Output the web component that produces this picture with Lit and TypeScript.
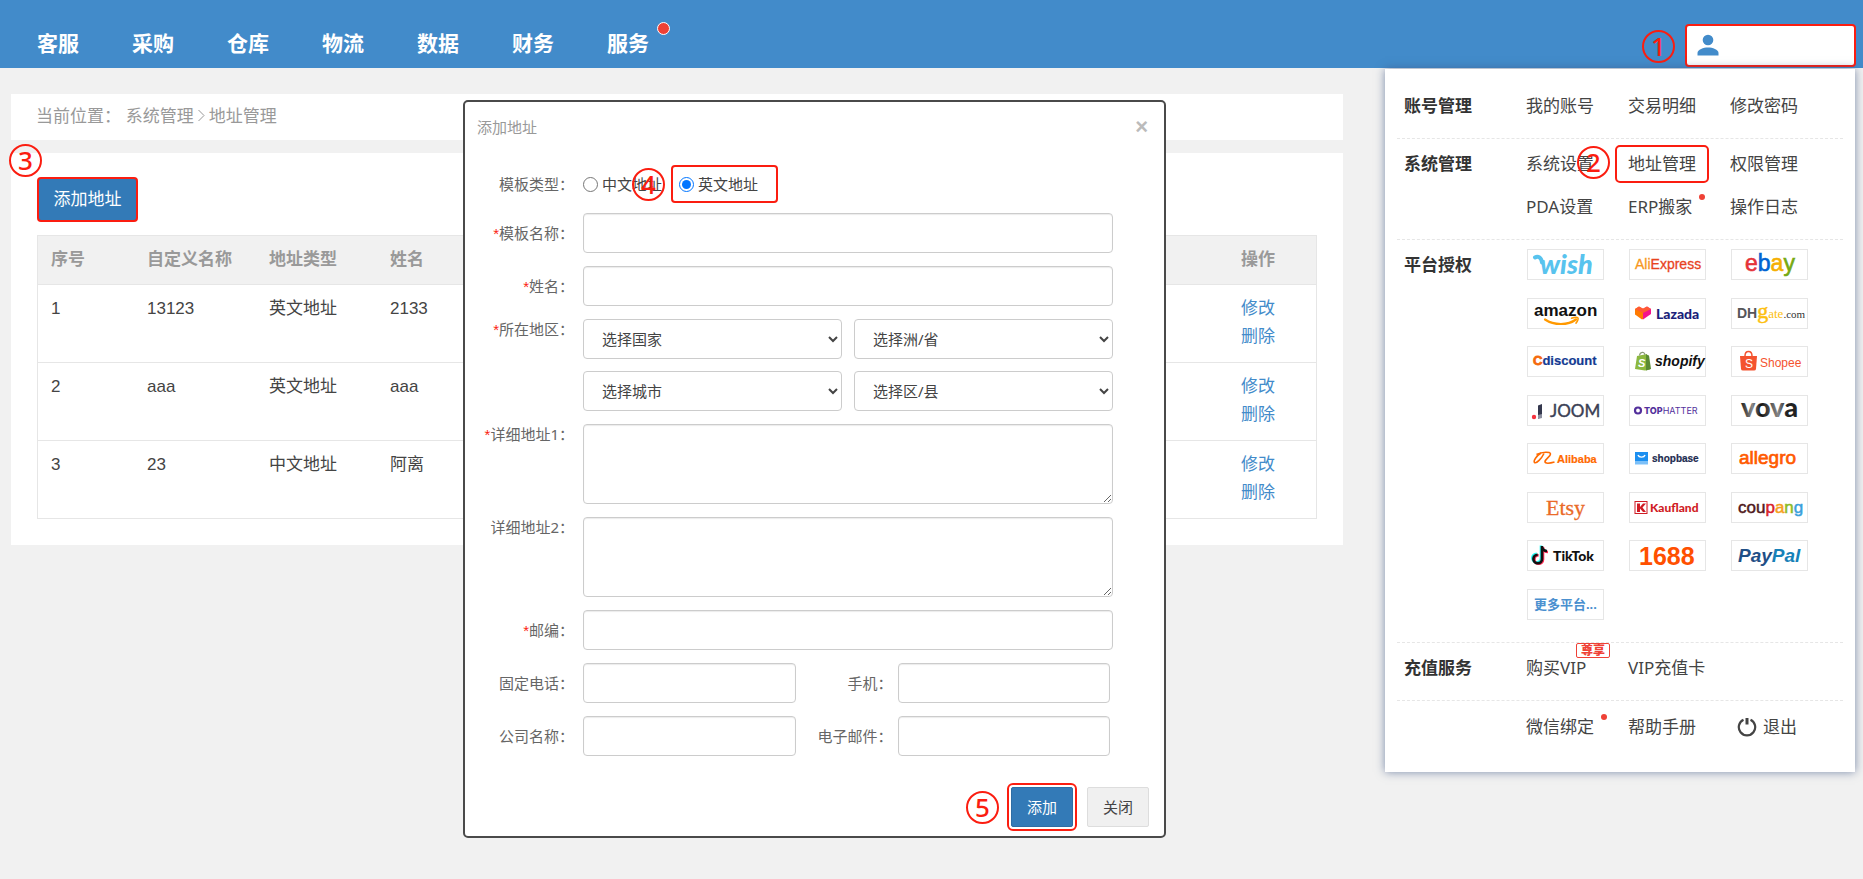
import { LitElement, html, svg, css, nothing } from "lit";
import { customElement, property } from "lit/decorators.js";

type Logo = { name: string; art: unknown };

const sans = "'Liberation Sans', sans-serif";
const serif = "'Liberation Serif', serif";
const lato = "Lato, sans-serif";
const inter = "Inter, sans-serif";

const LOGOS: Logo[] = [
  {
    name: "Wish",
    art: svg`<path d="M8 8.500c3-2 6.500 0 7 5" fill="none" stroke="#58c3ee" stroke-width="4" stroke-linecap="round"/>
      <text x="13" y="25" font-family=${lato} font-weight="900" font-style="italic" font-size="27" fill="#58c3ee">wish</text>`,
  },
  {
    name: "AliExpress",
    art: svg`<text x="6" y="20" font-family=${sans} font-size="14" fill="#f7971d" stroke="#f7971d" stroke-width=".3">Ali<tspan fill="#e8431f" stroke="#e8431f">Express</tspan></text>`,
  },
  {
    name: "eBay",
    art: svg`<text x="14" y="22" font-family=${sans} font-size="23" stroke-width=".6"><tspan fill="#e53238" stroke="#e53238">e</tspan><tspan fill="#0064d2" stroke="#0064d2">b</tspan><tspan fill="#f5af02" stroke="#f5af02">a</tspan><tspan fill="#76a912" stroke="#76a912">y</tspan></text>`,
  },
  {
    name: "Amazon",
    art: svg`<text x="7" y="18" font-family=${sans} font-weight="700" font-size="17" fill="#111">amazon</text>
      <path d="M18 21.500c9 6 23 6 31 0" fill="none" stroke="#f90" stroke-width="2.200" stroke-linecap="round"/>
      <path d="M44.500 20.300c3-1.200 6-1 6.500-.400s-.400 3.600-2 5.200" fill="none" stroke="#f90" stroke-width="1.500" stroke-linecap="round"/>`,
  },
  {
    name: "Lazada",
    art: svg`<path d="M6 11l4-2.500 4 2.500v10l-1 .500-7-5z" fill="#ff7a00"/><path d="M22 11l-4-2.500-4 2.500v10.500l8-5.500z" fill="#f4148c"/><path d="M6 11l8 4 8-4-4-2.500-4 2-4-2z" fill="#ff5a35"/>
      <text x="27" y="21" font-family=${lato} font-weight="900" font-size="14" fill="#1b1f7b">Lazada</text>`,
  },
  {
    name: "DHgate.com",
    art: svg`<text x="6" y="20" font-family=${sans} font-weight="700" font-size="14" fill="#565659">DH<tspan font-family=${serif} font-weight="400" font-size="22" fill="#fdc010" stroke="#fdc010" stroke-width=".5">g</tspan><tspan font-family=${serif} font-weight="400" font-size="13" fill="#fdc010">ate</tspan><tspan font-family=${serif} font-weight="400" font-size="11" fill="#333">.com</tspan></text>`,
  },
  {
    name: "Cdiscount",
    art: svg`<text x="6" y="19" font-family=${sans} font-weight="700" font-size="13" fill="#133a92" stroke="#133a92" stroke-width=".2"><tspan fill="#f56a0c" stroke="#f56a0c" stroke-width=".8">C</tspan>discount</text>`,
  },
  {
    name: "Shopify",
    art: svg`<path d="M8 10l10-2 3 15.500-5 1-10-1.500z" fill="#8cb83f"/><path d="M17 8.500l3 1 2 13.500-5 1.500z" fill="#5a8a33"/><path d="M10.500 9.500c.5-3.500 5-4.500 5.500-.5" fill="none" stroke="#8a9a78" stroke-width="1.200"/>
      <text x="9" y="21" font-family=${sans} font-weight="700" font-style="italic" font-size="11" fill="#fff">S</text>
      <text x="26" y="20" font-family=${sans} font-weight="700" font-style="italic" font-size="14" fill="#111">shopify</text>`,
  },
  {
    name: "Shopee",
    art: svg`<path d="M9 10h17l-1 13q-.200 1.500-2 1.500h-11q-1.800 0-2-1.500z" fill="#f4532f"/><path d="M14 10c0-6 7-6 7 0" fill="none" stroke="#f4532f" stroke-width="1.500"/>
      <text x="14" y="22" font-family=${sans} font-size="12" fill="#fff">S</text>
      <text x="29" y="21" font-family=${sans} font-size="12" fill="#f4532f">Shopee</text>`,
  },
  {
    name: "JOOM",
    art: svg`<circle cx="7" cy="22" r="2.200" fill="#f5333f"/><path d="M11 10.500l4-1.500v12.500l-4 2.500z" fill="#34384e"/><path d="M11 20l4-1v4l-4 1z" fill="#8d90a0"/>
      <text x="23" y="22" font-family=${lato} font-size="17" fill="#3b3f55" stroke="#3b3f55" stroke-width=".4">JOOM</text>`,
  },
  {
    name: "Tophatter",
    art: svg`<circle cx="9" cy="15.500" r="3" fill="none" stroke="#53309c" stroke-width="2.200"/>
      <text x="15" y="19" font-family=${inter} font-size="9" fill="#53309c"><tspan font-weight="800">TOP</tspan>HATTER</text>`,
  },
  {
    name: "VOVA",
    art: svg`<defs><linearGradient id="vv" x1="0" y1="0" x2="1" y2="0"><stop offset="0" stop-color="#222"/><stop offset=".2" stop-color="#888"/><stop offset=".35" stop-color="#111"/><stop offset=".65" stop-color="#888"/><stop offset=".8" stop-color="#222"/></linearGradient></defs>
      <text x="10" y="22" font-family=${lato} font-weight="900" font-size="27" fill="url(#vv)">vova</text>`,
  },
  {
    name: "Alibaba",
    art: svg`<path d="M14 10c-4 2.500-8 7.500-6.500 9.500 2 1.500 7-4 9.500-9" fill="none" stroke="#ff6a00" stroke-width="1.600"/>
      <path d="M9.500 11.500c6-3 14-3 14-.5s-5 5-5.500 7.500c-.300 2.500 5 1.800 9.500.500" fill="none" stroke="#ff6a00" stroke-width="1.600"/>
      <text x="30" y="20" font-family=${sans} font-weight="700" font-size="11" fill="#ff6a00" stroke="#ff6a00" stroke-width=".2">Alibaba</text>`,
  },
  {
    name: "ShopBase",
    art: svg`<path d="M6 9h13v9h-13z" fill="#1c8ff0"/><path d="M6 18h13v3.500h-13z" fill="#7cc0f8"/><path d="M9 12c1 2.800 6 2.800 7 0" fill="none" stroke="#fff" stroke-width="1.400"/>
      <text x="23" y="19" font-family=${sans} font-weight="700" font-size="10" fill="#1d2b50" stroke="#1d2b50" stroke-width=".2">shopbase</text>`,
  },
  {
    name: "Allegro",
    art: svg`<text x="8" y="21" font-family=${sans} font-size="19" fill="#ff5a00" stroke="#ff5a00" stroke-width=".7">allegro</text>`,
  },
  {
    name: "Etsy",
    art: svg`<text x="19" y="23" font-family=${serif} font-size="22" fill="#ea6a28" stroke="#ea6a28" stroke-width=".3">Etsy</text>`,
  },
  {
    name: "Kaufland",
    art: svg`<rect x="6" y="9.500" width="12" height="12" fill="#fff" stroke="#d01b24"/><path d="M8 11.500h3v3.500l3-3.500h3l-3.500 4 3.500 4.500h-3l-3-3.500v3.500h-3z" fill="#d01b24"/>
      <text x="21" y="20" font-family=${lato} font-weight="900" font-size="12" fill="#d01b24">Kaufland</text>`,
  },
  {
    name: "Coupang",
    art: svg`<text x="7" y="21" font-family=${sans} font-size="17" fill="#50191c" stroke="#50191c" stroke-width=".5">cou<tspan fill="#d8232a" stroke="#d8232a">p</tspan><tspan fill="#f6a01b" stroke="#f6a01b">a</tspan><tspan fill="#8dbb25" stroke="#8dbb25">n</tspan><tspan fill="#3aa0dc" stroke="#3aa0dc">g</tspan></text>`,
  },
  {
    name: "TikTok",
    art: svg`<g fill="none" stroke-width="2.600"><path d="M14 5.500v12.500a4.300 4.300 0 1 1-4.300-4.300M14 6.500q1 4 5 4" stroke="#25f4ee"/><path d="M16 7v12.500a4.300 4.300 0 1 1-4.300-4.300M16 8q1 4 5 4" stroke="#fe2c55"/><path d="M15 6v13a4.300 4.300 0 1 1-4.300-4.300M15 7q1 4 5 4" stroke="#111"/></g>
      <text x="26" y="21" font-family=${lato} font-weight="900" font-size="14" fill="#111">TikTok</text>`,
  },
  {
    name: "1688",
    art: svg`<text x="10" y="25" font-family=${sans} font-weight="700" font-size="25" fill="#ff5000">1688</text>`,
  },
  {
    name: "PayPal",
    art: svg`<text x="7" y="22" font-family=${sans} font-weight="700" font-style="italic" font-size="19" fill="#1f4f86">Pay<tspan fill="#1781b8">Pal</tspan></text>`,
  },
  {
    name: "更多平台",
    art: svg`<text x="7" y="20" font-family="'Liberation Sans', 'Noto Sans CJK SC', sans-serif" font-weight="700" font-size="13" fill="#4a90cf">更多平台...</text>`,
  },
];

@customElement("step-mark")
export class StepMark extends LitElement {
  static styles = css`
    :host {
      box-sizing: border-box;
      display: block;
      width: 33px;
      height: 33px;
      border: 2px solid #fb1d10;
      border-radius: 50%;
      color: #fb1d10;
      font: 500 26px/29px "Noto Sans", sans-serif;
      text-align: center;
    }
  `;
  render() {
    return html`<slot></slot>`;
  }
}

@customElement("account-menu")
export class AccountMenu extends LitElement {
  static styles = css`
    :host {
      box-sizing: border-box;
      display: block;
      padding: 12px 12px 13px;
      background: #fff;
      box-shadow: 0 0 9px rgba(60, 85, 130, 0.65);
      color: #444;
      font: 17px/26px "Noto Sans", "Noto Sans CJK SC", sans-serif;
    }
    .section {
      display: grid;
      grid-template-columns: 122px 1fr;
      padding: 12px 0 19px 7px;
      border-bottom: 1px dashed #e6e6e6;
    }
    .section.last {
      padding-top: 13px;
      border-bottom: 0;
    }
    h2 {
      margin: 0;
      color: #333;
      font-size: 17px;
      line-height: 26px;
      font-weight: 700;
    }
    .links {
      display: grid;
      grid-template-columns: repeat(3, 102px);
      row-gap: 17px;
    }
    a {
      position: relative;
      justify-self: start;
      color: inherit;
      text-decoration: none;
      white-space: nowrap;
    }
    .picked::before {
      content: "";
      position: absolute;
      inset: -6px -13px;
      border: 2px solid #fb1d10;
      border-radius: 5px;
    }
    step-mark {
      position: absolute;
      top: -5px;
      left: -51px;
    }
    .dot::after {
      content: "";
      position: absolute;
      top: 0;
      right: -13px;
      width: 6px;
      height: 6px;
      border-radius: 50%;
      background: #ef4136;
    }
    .tag {
      position: absolute;
      top: -12px;
      left: 50px;
      padding: 0 4px;
      border: 1px solid #ef4136;
      border-radius: 2px;
      background: #fff;
      color: #ef4136;
      font-size: 12px;
      line-height: 13px;
      font-weight: 900;
    }
    .exit {
      display: flex;
      align-items: center;
      gap: 6px;
      padding-left: 7px;
    }
    .logos {
      display: grid;
      grid-template-columns: repeat(3, 102px);
      align-content: space-between;
      height: 371px;
      padding: 0 0 3px 1px;
      margin-top: -3px;
    }
    .logo {
      box-sizing: border-box;
      width: 77px;
      height: 31px;
      border: 1px solid #e6e6e6;
    }
    .logo svg {
      display: block;
      overflow: visible;
    }
  `;
  render() {
    return html`
      <section class="section">
        <h2>账号管理</h2>
        <div class="links">
          <a href="#">我的账号</a><a href="#">交易明细</a><a href="#">修改密码</a>
        </div>
      </section>
      <section class="section">
        <h2>系统管理</h2>
        <div class="links">
          <a href="#">系统设置</a>
          <a href="#" class="picked">地址管理<step-mark>2</step-mark></a>
          <a href="#">权限管理</a>
          <a href="#">PDA设置</a><a href="#" class="dot">ERP搬家</a><a href="#">操作日志</a>
        </div>
      </section>
      <section class="section">
        <h2>平台授权</h2>
        <div class="logos">
          ${LOGOS.map(
            (l) => html`<a class="logo" href="#" aria-label=${l.name}>
              <svg width="75" height="29" viewBox="1 1 75 29" aria-hidden="true">${l.art}</svg>
            </a>`
          )}
        </div>
      </section>
      <section class="section">
        <h2>充值服务</h2>
        <div class="links">
          <a href="#">购买VIP<span class="tag">尊享</span></a><a href="#">VIP充值卡</a>
        </div>
      </section>
      <section class="section last">
        <h2></h2>
        <div class="links">
          <a href="#" class="dot">微信绑定</a><a href="#">帮助手册</a>
          <a href="#" class="exit">
            <svg width="20" height="20" viewBox="0 0 20 20" fill="none" stroke="#444" aria-hidden="true">
              <path d="M6.500 2.700a8.200 8.200 0 1 0 7 0" stroke-width="2.200" />
              <path d="M10 1v6.500" stroke-width="3" />
            </svg>退出
          </a>
        </div>
      </section>
    `;
  }
}

@customElement("address-dialog")
export class AddressDialog extends LitElement {
  static styles = css`
    :host {
      box-sizing: border-box;
      display: block;
      padding: 13px 0 9px;
      border: 2px solid #4a4a4a;
      border-radius: 5px;
      background: #fff;
      color: #666;
      font: 15px/24px "Noto Sans", "Noto Sans CJK SC", sans-serif;
    }
    header {
      display: flex;
      justify-content: space-between;
      margin-bottom: 26px;
      padding: 0 16px 0 12px;
    }
    h1 {
      margin: 0;
      color: #999;
      font-size: 15px;
      font-weight: 400;
    }
    .close {
      padding: 0;
      border: 0;
      background: none;
      color: #bbb;
      font: 700 22px/18px "Liberation Sans", sans-serif;
    }
    form {
      display: flex;
      flex-direction: column;
      gap: 13px;
    }
    .row {
      display: grid;
      grid-template-columns: 109px 1fr;
      column-gap: 9px;
      align-items: center;
      padding-right: 51px;
    }
    .row.tall {
      align-items: start;
    }
    .row.tall .label {
      line-height: 20px;
    }
    .row.types {
      margin-bottom: -3px;
    }
    .label {
      text-align: right;
      white-space: nowrap;
    }
    i {
      color: #fb1d10;
      font-family: "Liberation Sans", sans-serif;
      font-style: normal;
    }
    input,
    select,
    textarea {
      box-sizing: border-box;
      width: 100%;
      height: 40px;
      margin: 0;
      border: 1px solid #ccc;
      border-radius: 4px;
      background: #fff;
      color: #444;
      font: inherit;
      box-shadow: inset 0 1px 1px rgba(0, 0, 0, 0.08);
    }
    input[type="radio"] {
      width: 15px;
      height: 15px;
      box-shadow: none;
    }
    select {
      padding: 0 4px 0 14px;
      box-shadow: none;
    }
    textarea {
      display: block;
      height: 80px;
    }
    .options {
      display: flex;
      align-items: center;
      height: 38px;
    }
    .option {
      box-sizing: border-box;
      display: flex;
      align-items: center;
      gap: 4px;
      color: #444;
    }
    .option.picked {
      position: relative;
      height: 38px;
      margin-left: 9px;
      padding: 0 18px 0 6px;
      border: 2px solid #fb1d10;
      border-radius: 4px;
    }
    .picked step-mark {
      position: absolute;
      top: 1px;
      left: -41px;
    }
    .selects {
      display: grid;
      grid-template-columns: 1fr 1fr;
      gap: 12px;
    }
    .pair {
      display: grid;
      grid-template-columns: 1fr 92px 1fr;
      column-gap: 5px;
      align-items: center;
      padding-right: 3px;
    }
    footer {
      display: flex;
      justify-content: flex-end;
      gap: 14px;
      margin-top: 31px;
      padding-right: 15px;
    }
    .btn {
      position: relative;
      width: 62px;
      height: 40px;
      padding: 0;
      border: 1px solid #ddd;
      border-radius: 2px;
      background: #f0f0f0;
      color: #444;
      font: inherit;
    }
    .btn.primary {
      border-color: #2e6da4;
      background: #337ab7;
      color: #fff;
      outline: 2px solid #fb1d10;
      outline-offset: 2px;
    }
    .btn step-mark {
      position: absolute;
      top: 3px;
      left: -46px;
    }
  `;

  private star = html`<i>*</i>`;

  private line(id: string, text: string, required = true) {
    return html`<div class="row">
      <label class="label" for=${id}>${required ? this.star : nothing}${text}：</label>
      <input id=${id} type="text" />
    </div>`;
  }

  private area(id: string, text: string, required: boolean) {
    return html`<div class="row tall">
      <label class="label" for=${id}>${required ? this.star : nothing}${text}：</label>
      <textarea id=${id}></textarea>
    </div>`;
  }

  private pair(a: string, aText: string, b: string, bText: string) {
    return html`<div class="row">
      <label class="label" for=${a}>${aText}：</label>
      <div class="pair">
        <input id=${a} type="text" />
        <label class="label" for=${b}>${bText}：</label>
        <input id=${b} type="text" />
      </div>
    </div>`;
  }

  render() {
    return html`
      <header>
        <h1>添加地址</h1>
        <button class="close" type="button" aria-label="关闭">×</button>
      </header>
      <form>
        <div class="row types">
          <span class="label">模板类型：</span>
          <div class="options" role="radiogroup" aria-label="模板类型">
            <label class="option"><input type="radio" name="kind" />中文地址</label>
            <label class="option picked">
              <input type="radio" name="kind" checked />英文地址
              <step-mark>4</step-mark>
            </label>
          </div>
        </div>
        ${this.line("title", "模板名称")} ${this.line("person", "姓名")}
        <div class="row tall">
          <label class="label" for="country">${this.star}所在地区：</label>
          <div class="selects">
            <select id="country"><option>选择国家</option></select>
            <select aria-label="洲/省"><option>选择洲/省</option></select>
            <select aria-label="城市"><option>选择城市</option></select>
            <select aria-label="区/县"><option>选择区/县</option></select>
          </div>
        </div>
        ${this.area("addr1", "详细地址1", true)} ${this.area("addr2", "详细地址2", false)}
        ${this.line("zip", "邮编")} ${this.pair("tel", "固定电话", "mobile", "手机")}
        ${this.pair("company", "公司名称", "mail", "电子邮件")}
      </form>
      <footer>
        <button class="btn primary" type="button">添加<step-mark>5</step-mark></button>
        <button class="btn" type="button">关闭</button>
      </footer>
    `;
  }
}

@customElement("app-root")
export class AppRoot extends LitElement {
  @property({ attribute: false }) rows = [
    ["1", "13123", "英文地址", "2133"],
    ["2", "aaa", "英文地址", "aaa"],
    ["3", "23", "中文地址", "阿离"],
  ];

  static styles = css`
    :host {
      position: relative;
      display: block;
      min-height: 100vh;
      background: #f1f1f1;
      color: #444;
      font: 17px/28px "Liberation Sans", "Noto Sans CJK SC", sans-serif;
    }
    .top {
      box-sizing: border-box;
      display: flex;
      justify-content: space-between;
      height: 68px;
      padding-left: 37px;
      background: #428bca;
    }
    nav {
      display: flex;
      gap: 53px;
      padding-top: 19px;
    }
    nav a {
      position: relative;
      color: #fff;
      font-size: 21px;
      line-height: 50px;
      font-weight: 700;
      text-decoration: none;
    }
    .new::after {
      content: "";
      position: absolute;
      top: 3px;
      right: -21px;
      width: 11px;
      height: 11px;
      border: 1px solid #fff;
      border-radius: 50%;
      background: #ef4136;
    }
    .user {
      position: relative;
      box-sizing: border-box;
      width: 171px;
      height: 43px;
      margin: 24px 7px 0 0;
      padding: 0 10px 2px;
      border: 2px solid #fb1d10;
      border-radius: 4px;
      background: #fff;
      text-align: left;
    }
    .user svg {
      display: block;
    }
    .user step-mark {
      position: absolute;
      top: 4px;
      left: -45px;
    }
    main {
      display: flex;
      flex-direction: column;
      gap: 13px;
      padding: 26px 520px 26px 11px;
    }
    .crumbs {
      padding: 9px 25px;
      background: #fff;
      color: #999;
    }
    .crumbs a {
      color: inherit;
      text-decoration: none;
    }
    .crumbs svg {
      margin: 0 3px;
    }
    .card {
      padding: 24px 26px 26px;
      background: #fff;
    }
    .add {
      position: relative;
      display: block;
      width: 101px;
      height: 45px;
      margin-bottom: 13px;
      padding: 0;
      border: 2px solid #fb1d10;
      border-radius: 4px;
      background: #337ab7;
      color: #fff;
      font: inherit;
    }
    .add step-mark {
      position: absolute;
      top: -35px;
      left: -30px;
    }
    table {
      width: 100%;
      table-layout: fixed;
      border-collapse: collapse;
      border: 1px solid #e6e6e6;
    }
    th {
      height: 48px;
      padding: 0 13px;
      background: #f1f1f1;
      color: #999;
      text-align: left;
      font-weight: 700;
    }
    td {
      padding: 10px 13px 11px;
      border-top: 1px solid #e6e6e6;
      vertical-align: top;
    }
    .no {
      width: 70px;
    }
    .custom {
      width: 96px;
    }
    .kind {
      width: 95px;
    }
    .act {
      width: 62px;
    }
    td a {
      display: block;
      color: #428bca;
      text-decoration: none;
    }
    account-menu {
      position: absolute;
      z-index: 2;
      top: 69px;
      right: 8px;
      width: 470px;
    }
    address-dialog {
      position: absolute;
      z-index: 1;
      top: 100px;
      left: 463px;
      width: 703px;
    }
  `;

  render() {
    return html`
      <div class="top">
        <nav>
          ${["客服", "采购", "仓库", "物流", "数据", "财务", "服务"].map(
            (t) => html`<a href="#" class=${t === "服务" ? "new" : ""}>${t}</a>`
          )}
        </nav>
        <button class="user" type="button" aria-label="账号">
          <svg width="22" height="22" viewBox="0 0 22 22" fill="#428bca" aria-hidden="true">
            <circle cx="11" cy="6" r="5.300" />
            <path d="M0.500 21.500v-2.500c0-3.600 6-5.600 10.500-5.600s10.500 2 10.500 5.600v2.500z" />
          </svg>
          <step-mark>1</step-mark>
        </button>
      </div>
      <main>
        <div class="crumbs">
          当前位置： <a href="#">系统管理</a
          ><svg width="9" height="13" viewBox="0 0 9 13" fill="none" stroke="#999" aria-hidden="true">
            <path d="M1.500 1l5.500 5.500-5.500 5.500" /></svg
          ><a href="#">地址管理</a>
        </div>
        <div class="card">
          <button class="add" type="button">添加地址<step-mark>3</step-mark></button>
          <table>
            <thead>
              <tr>
                <th class="no">序号</th>
                <th class="custom">自定义名称</th>
                <th class="kind">地址类型</th>
                <th>姓名</th>
                <th class="act">操作</th>
              </tr>
            </thead>
            <tbody>
              ${this.rows.map(
                (r) => html`<tr>
                  ${r.map((c) => html`<td>${c}</td>`)}
                  <td><a href="#">修改</a><a href="#">删除</a></td>
                </tr>`
              )}
            </tbody>
          </table>
        </div>
      </main>
      <address-dialog role="dialog" aria-label="添加地址"></address-dialog>
      <account-menu></account-menu>
    `;
  }
}
